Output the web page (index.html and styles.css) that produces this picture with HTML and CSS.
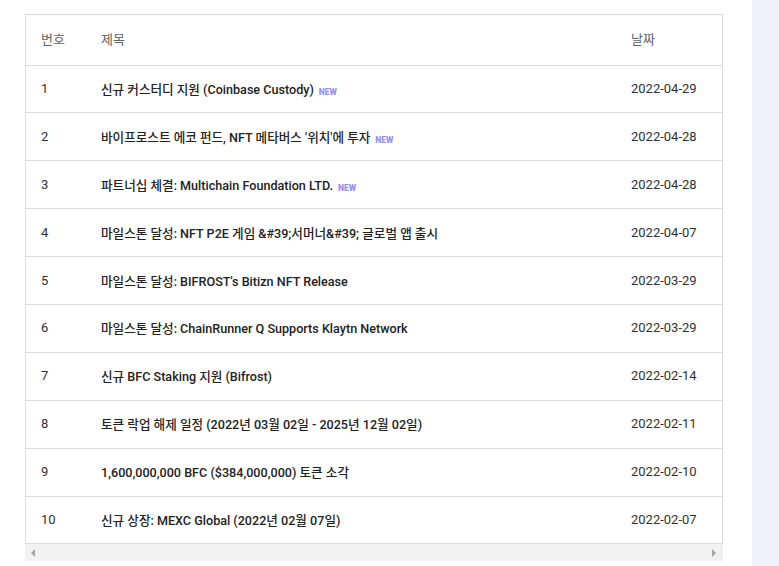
FILE: index.html
```html
<!DOCTYPE html>
<html lang="ko">
<head>
<meta charset="utf-8">
<link rel="stylesheet" href="styles.css">
</head>
<body>
<div class="page">
  <main class="content">
    <div class="table-wrap">
      <table class="board">
        <colgroup>
          <col class="c-no">
          <col class="c-title">
          <col class="c-date">
        </colgroup>
        <thead>
          <tr><th>번호</th><th>제목</th><th>날짜</th></tr>
        </thead>
        <tbody>
          <tr><td class="no">1</td><td class="title">신규 커스터디 지원 (Coinbase Custody)<span class="new">NEW</span></td><td class="date">2022-04-29</td></tr>
          <tr><td class="no">2</td><td class="title">바이프로스트 에코 펀드, NFT 메타버스 '위치'에 투자<span class="new">NEW</span></td><td class="date">2022-04-28</td></tr>
          <tr><td class="no">3</td><td class="title">파트너십 체결: Multichain Foundation LTD.<span class="new">NEW</span></td><td class="date">2022-04-28</td></tr>
          <tr><td class="no">4</td><td class="title">마일스톤 달성: NFT P2E 게임 &amp;#39;서머너&amp;#39; 글로벌 앱 출시</td><td class="date">2022-04-07</td></tr>
          <tr><td class="no">5</td><td class="title">마일스톤 달성: BIFROST's Bitizn NFT Release</td><td class="date">2022-03-29</td></tr>
          <tr><td class="no">6</td><td class="title">마일스톤 달성: ChainRunner Q Supports Klaytn Network</td><td class="date">2022-03-29</td></tr>
          <tr><td class="no">7</td><td class="title">신규 BFC Staking 지원 (Bifrost)</td><td class="date">2022-02-14</td></tr>
          <tr><td class="no">8</td><td class="title">토큰 락업 해제 일정 (2022년 03월 02일 - 2025년 12월 02일)</td><td class="date">2022-02-11</td></tr>
          <tr><td class="no">9</td><td class="title">1,600,000,000 BFC ($384,000,000) 토큰 소각</td><td class="date">2022-02-10</td></tr>
          <tr><td class="no">10</td><td class="title">신규 상장: MEXC Global (2022년 02월 07일)</td><td class="date">2022-02-07</td></tr>
        </tbody>
      </table>
    </div>
    <div class="hscroll">
      <span class="arrow left"></span>
      <span class="arrow right"></span>
    </div>
  </main>
  <aside class="side"></aside>
</div>
</body>
</html>
```

FILE: styles.css
```css
* { box-sizing: border-box; }
html, body {
  margin: 0;
  padding: 0;
  background: #ffffff;
}
body {
  font-family: Roboto, "Noto Sans CJK KR", sans-serif;
  font-size: 13px;
  color: #303133;
}
.page {
  display: flex;
  width: 779px;
  height: 566px;
  overflow: hidden;
}
.content {
  width: 723px;
  padding: 14px 0 0 25px;
  flex: none;
}
.side {
  margin-left: 29px;
  flex: 1;
  background: #eef1f6;
}
.table-wrap {
  border: 1px solid #d7dae0;
  border-bottom: none;
}
.board {
  width: 100%;
  border-collapse: collapse;
  table-layout: fixed;
}
.c-no { width: 60px; }
.c-date { width: 106px; }
.board th {
  height: 50px;
  padding: 0 15px 2px;
  text-align: left;
  font-weight: 400;
  color: #606266;
  border-bottom: 1px solid #d7dae0;
  vertical-align: middle;
}
.board td {
  height: 47.9px;
  padding: 0 15px 1px;
  border-bottom: 1px solid #d7dae0;
  vertical-align: middle;
  white-space: nowrap;
}
.board td.title {
  font-size: 12.6px;
  font-weight: 500;
  color: #222222;
}
.new {
  margin-left: 5px;
  font-size: 8.5px;
  font-weight: 900;
  color: #9792f5;
  vertical-align: -1px;
}
.hscroll {
  height: 17px;
  background: #f1f1f1;
  display: flex;
  align-items: center;
  justify-content: space-between;
  padding: 0 7px 0 6px;
}
.arrow {
  width: 0;
  height: 0;
  border-top: 4px solid transparent;
  border-bottom: 4px solid transparent;
}
.arrow.left { border-right: 4px solid #a3a3a3; }
.arrow.right { border-left: 4px solid #a3a3a3; }
```
